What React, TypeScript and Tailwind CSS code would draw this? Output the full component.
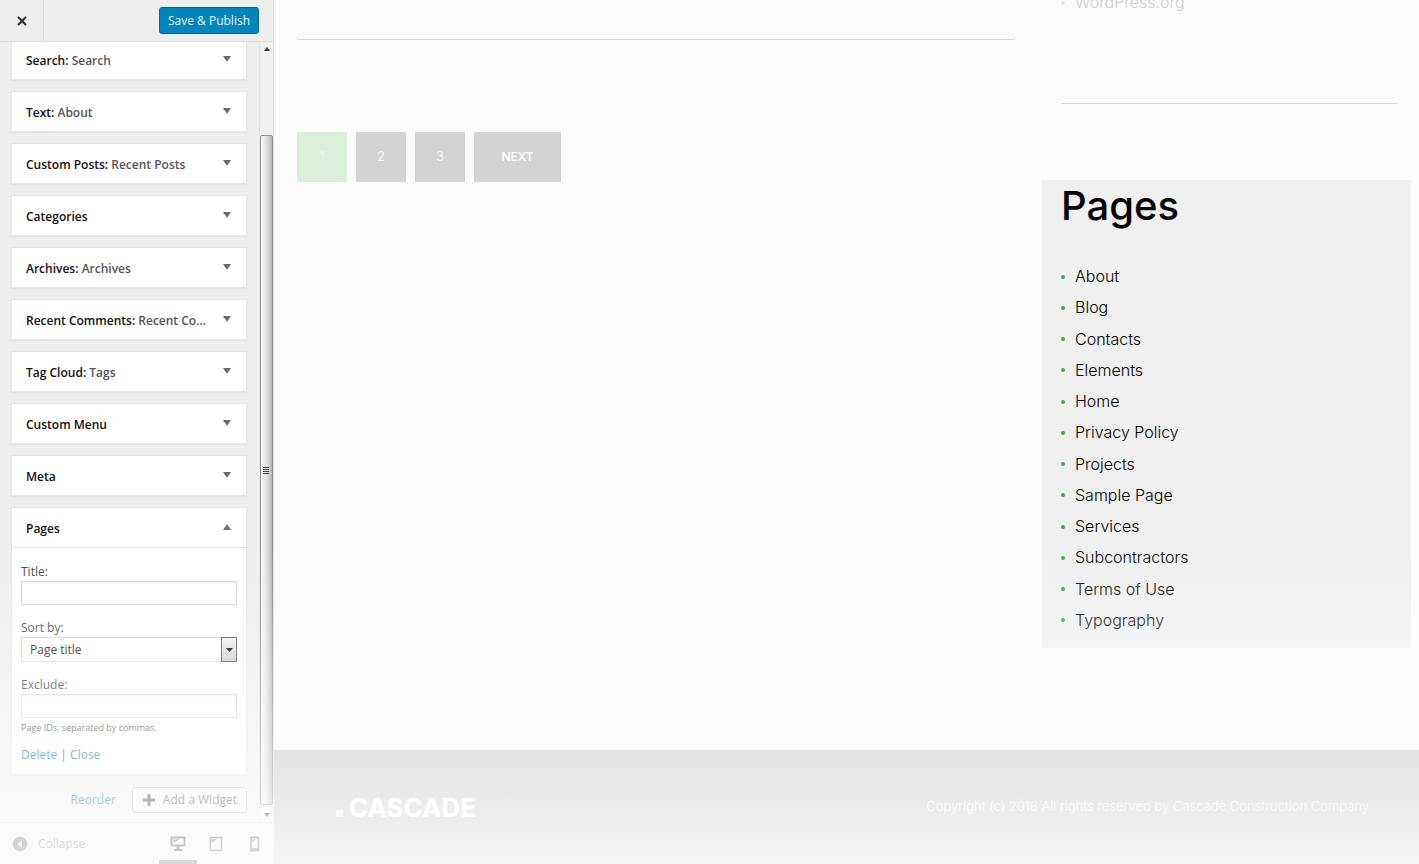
import React from "react";

type Widget = { type: string; title?: string };

const widgets: Widget[] = [
  { type: "Search", title: "Search" },
  { type: "Text", title: "About" },
  { type: "Custom Posts", title: "Recent Posts" },
  { type: "Categories" },
  { type: "Archives", title: "Archives" },
  { type: "Recent Comments", title: "Recent Co..." },
  { type: "Tag Cloud", title: "Tags" },
  { type: "Custom Menu" },
  { type: "Meta" },
];

const pages = [
  "About",
  "Blog",
  "Contacts",
  "Elements",
  "Home",
  "Privacy Policy",
  "Projects",
  "Sample Page",
  "Services",
  "Subcontractors",
  "Terms of Use",
  "Typography",
];

function Arrow({ up = false }: { up?: boolean }) {
  return (
    <svg className="mb-[3px] h-[6px] w-2 shrink-0 fill-[#6b6f74]" viewBox="0 0 8 6" aria-hidden="true">
      <path d={up ? "M0 6 4 0 8 6z" : "M0 0h8L4 6z"} />
    </svg>
  );
}

function WidgetHeader({ widget, open = false }: { widget: Widget; open?: boolean }) {
  return (
    <button
      type="button"
      aria-expanded={open}
      className="flex h-[39px] w-full items-center justify-between pt-[2px] pr-[15px] pl-[14px] text-left text-[12px] font-semibold text-[#111]"
    >
      <span className="whitespace-nowrap">
        {widget.type}
        {widget.title && (
          <>
            : <span className="text-[#555]">{widget.title}</span>
          </>
        )}
      </span>
      <Arrow up={open} />
    </button>
  );
}

function PagesForm() {
  const field = "block h-6 w-full border border-[#d4d4d4] bg-white px-2 text-[12px] shadow-[inset_0_1px_2px_rgba(0,0,0,0.07)]";
  return (
    <form className="border-t border-[#e5e5e5] px-[9px] pt-[15px] pb-[10px] text-[12px] leading-[18px] text-[#444]">
      <label htmlFor="title" className="block">Title:</label>
      <input id="title" type="text" className={field} />
      <label htmlFor="sort" className="mt-[14px] block">Sort by:</label>
      <div className="relative">
        <select
          id="sort"
          className="block h-[25px] w-full appearance-none border border-[#d4d4d4] bg-white px-2 text-[12px] text-[#111]"
        >
          <option>Page title</option>
          <option>Page order</option>
          <option>Page ID</option>
        </select>
        <span className="pointer-events-none absolute inset-y-0 right-0 flex w-4 items-center justify-center border border-[#555] bg-linear-to-b from-[#f4f4f4] to-[#c8c8c8]">
          <svg className="h-1 w-[7px]" viewBox="0 0 7 4" aria-hidden="true">
            <path d="M0 0h7L3.500 4z" />
          </svg>
        </span>
      </div>
      <label htmlFor="exclude" className="mt-[14px] block">Exclude:</label>
      <input id="exclude" type="text" className={field} />
      <p className="mt-[2px] text-[9px] leading-4">Page IDs, separated by commas.</p>
      <p className="mt-[10px]">
        <a href="#delete" className="text-[#0073aa]">Delete</a> |{" "}
        <a href="#close" className="text-[#0073aa]">Close</a>
      </p>
    </form>
  );
}

function Scrollbar() {
  return (
    <div className="flex w-[14px] shrink-0 flex-col border-l border-[#e2e2e2] bg-[#f0f0f0]" aria-hidden="true">
      <svg className="mx-auto mt-[5px] h-1 w-[6px]" viewBox="0 0 6 4">
        <path d="M0 4 3 0l3 4z" fill="#333" />
      </svg>
      <div className="mt-[84px] flex flex-1 items-center rounded-xs border border-[#8f8f95] bg-linear-to-r from-[#fafafa] via-[#e2e2e6] to-[#b4b4ba] pl-[2px]">
        <svg className="h-[7px] w-[6px]" viewBox="0 0 6 7">
          <path d="M0 .5h6M0 2.500h6M0 4.500h6M0 6.500h6" stroke="#444" />
        </svg>
      </div>
      <svg className="mx-auto mt-2 mb-[5px] h-1 w-[6px]" viewBox="0 0 6 4">
        <path d="M0 0h6L3 4z" fill="#333" />
      </svg>
    </div>
  );
}

function Sidebar() {
  return (
    <div className="flex w-[274px] shrink-0 flex-col border-r border-[#ddd] bg-[#eee] font-['Open_Sans','Noto_Sans',sans-serif]">
      <header className="flex h-[42px] shrink-0 items-center justify-between border-b border-[#ddd] pr-[14px]">
        <button
          type="button"
          aria-label="Close"
          className="flex h-full w-11 items-center justify-center border-r border-[#ddd]"
        >
          <svg className="h-[10px] w-[10px]" viewBox="0 0 10 10" aria-hidden="true">
            <path d="M1 1l8 8M9 1L1 9" stroke="#2b2b2b" strokeWidth="2" />
          </svg>
        </button>
        <button
          type="button"
          className="h-[27px] rounded-[3px] border border-[#006799] bg-[#0085ba] px-2 pt-px text-[12px] text-[#e6f5fb]"
        >
          Save &amp; Publish
        </button>
      </header>

      <div className="flex min-h-0 flex-1 overflow-hidden">
        <div className="-mt-[3px] flex min-w-0 flex-1 flex-col pr-3 pl-[11px]">
          <ul className="flex flex-col gap-[11px]">
            {widgets.map((w) => (
              <li key={w.type} className="border border-[#e5e5e5] bg-white shadow-[0_1px_1px_rgba(0,0,0,0.04)]">
                <WidgetHeader widget={w} />
              </li>
            ))}
            <li className="border border-[#e5e5e5] bg-white shadow-[0_1px_1px_rgba(0,0,0,0.04)]">
              <WidgetHeader widget={{ type: "Pages" }} open />
              <PagesForm />
            </li>
          </ul>
          <div className="mt-[12px] flex items-center justify-end gap-4 text-[12px]">
            <a href="#reorder" className="text-[#0073aa]">Reorder</a>
            <button
              type="button"
              className="flex h-[26px] items-center gap-2 rounded-[3px] border border-[#bbb] bg-[#f7f7f7] pr-[9px] pl-[10px] text-[#444]"
            >
              <svg className="h-3 w-3" viewBox="0 0 12 12" aria-hidden="true">
                <path d="M6 0v12M0 6h12" stroke="#333" strokeWidth="3" />
              </svg>
              Add a Widget
            </button>
          </div>
        </div>
        <Scrollbar />
      </div>

      <footer className="flex h-[42px] shrink-0 justify-between border-t border-[#ddd] pl-3">
        <button type="button" className="flex items-center gap-[10px] text-[12px] text-[#666]">
          <svg className="h-4 w-4" viewBox="0 0 16 16" aria-hidden="true">
            <circle cx="8" cy="8" r="7.300" fill="#444" />
            <path d="M10 4v8L5 8z" fill="#eee" />
          </svg>
          Collapse
        </button>
        <div className="flex">
          <button
            type="button"
            aria-label="Desktop preview"
            className="flex w-[38px] items-center justify-center border-b-4 border-[#333] pt-1"
          >
            <svg className="h-4 w-4" viewBox="0 0 16 16" fill="none" aria-hidden="true">
              <path d="M1.500 1.500h13v8h-13z" stroke="#111" strokeWidth="1.800" />
              <path d="M3.500 3.500h6L3.500 6.500zM6.500 10h3v3h-3zM4 13h8v2H4z" fill="#111" />
            </svg>
          </button>
          <button type="button" aria-label="Tablet preview" className="flex w-[38px] items-center justify-center">
            <svg className="h-4 w-4" viewBox="0 0 16 16" fill="none" aria-hidden="true">
              <path d="M2.500 1.500h11v13h-11z" stroke="#444" strokeWidth="1.600" />
              <path d="M4 3h5L4 7z" fill="#555" />
            </svg>
          </button>
          <button type="button" aria-label="Mobile preview" className="flex w-[38px] items-center justify-center">
            <svg className="h-4 w-4" viewBox="0 0 16 16" fill="none" aria-hidden="true">
              <path d="M5 1.500h7.500v13H5z" stroke="#444" strokeWidth="1.800" />
              <path d="M6.500 3h3L6.500 7zM5.500 12h6.500v2H5.500z" fill="#555" />
            </svg>
          </button>
        </div>
      </footer>
    </div>
  );
}

function Pagination() {
  const box = "flex h-[50px] w-[50px] items-center justify-center bg-[#d3d3d3] text-[13px] font-light text-white";
  return (
    <nav aria-label="Pagination" className="mt-[92px] flex gap-[9px]">
      <a
        href="#1"
        aria-current="page"
        className="flex h-[50px] w-[50px] items-center justify-center bg-[#daeedb] text-[13px] font-light text-[#f3faf3]"
      >
        1
      </a>
      <a href="#2" className={box}>2</a>
      <a href="#3" className={box}>3</a>
      <a
        href="#next"
        className="flex h-[50px] w-[87px] items-center justify-center bg-[#d3d3d3] text-[12px] font-medium text-white"
      >
        NEXT
      </a>
    </nav>
  );
}

function Preview() {
  return (
    <div className="flex min-w-0 flex-1 flex-col bg-[#fcfcfc] font-['Inter',sans-serif]">
      <div className="flex min-h-0 flex-1 gap-[27px] overflow-hidden pr-2 pl-[23px]">
        <main className="min-w-0 flex-1 pt-[39px]">
          <hr className="border-t border-[#d6d6d6]" />
          <Pagination />
        </main>
        <aside className="w-[369px] shrink-0">
          <div className="mr-[14px] ml-[19px] flex h-[104px] flex-col border-b border-[#d6d6d6]">
            <a href="#wordpress" className="-mt-[13px] flex items-center gap-[10px] text-[16px] leading-[31px] font-light text-[#ccc]">
              <span className="h-1 w-1 rounded-full bg-[#d5ecd6]" />
              WordPress.org
            </a>
          </div>
          <section className="mt-[76px] bg-[#f0f0f0] pt-[2px] pb-3 pl-[19px]">
            <h2 className="text-[40px] leading-[48px] font-medium text-black">Pages</h2>
            <ul className="mt-[31px] flex h-[375px] flex-col justify-between text-[16px] leading-[31px] font-light text-black">
              {pages.map((p) => (
                <li key={p} className="flex items-center gap-[10px]">
                  <span className="h-1 w-1 rounded-full bg-[#3fa845]" />
                  <a href="#page">{p}</a>
                </li>
              ))}
            </ul>
          </section>
        </aside>
      </div>
      <footer className="flex h-[114px] shrink-0 items-center justify-between bg-[#c8c8c8] pr-[50px] pl-[62px] text-white">
        <a href="#home" className="flex items-baseline gap-[6px] text-[26px] font-bold">
          <span className="h-[7px] w-[7px] bg-[#e8f5e9]" />
          CASCADE
        </a>
        <p className="text-[13px] font-light">
          Copyright (c) 2016 All rights reserved by Cascade Construction Company
        </p>
      </footer>
    </div>
  );
}

export default function App() {
  return (
    <div className="relative flex h-screen overflow-hidden">
      <Sidebar />
      <Preview />
      <div className="pointer-events-none absolute inset-x-0 bottom-0 h-[37%] bg-linear-to-b from-white/0 via-white/50 via-65% to-white/82" />
    </div>
  );
}
